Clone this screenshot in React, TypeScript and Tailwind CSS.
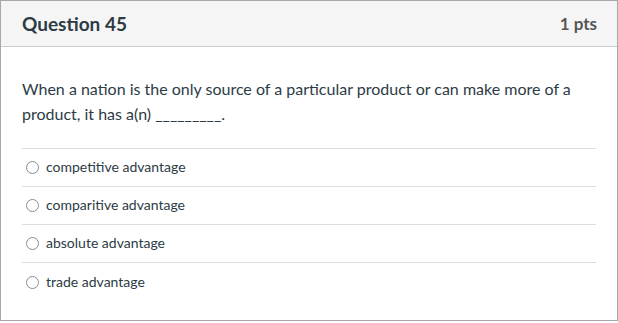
const answers = [
  "competitive advantage",
  "comparitive advantage",
  "absolute advantage",
  "trade advantage",
];

export default function App() {
  return (
    <div className="w-[618px] h-[323px] bg-white font-['Lato',sans-serif]">
      <div className="h-[321px] border border-[#a8a8a8] flex flex-col">
        <div className="h-[46px] bg-[#f5f5f5] border-b border-[#c7cdd1] flex items-center justify-between pl-[21px] pr-[20px]">
          <h2 className="text-[19px] font-bold text-[#2d3b45] mt-[1px]">Question 45</h2>
          <span className="text-[17px] font-bold text-[#555] mt-[1px]">1 pts</span>
        </div>
        <div className="px-[21px] pt-[29px]">
          <p className="text-[16px] leading-[25px] text-[#2d3b45]">
            When a nation is the only source of a particular product or can make more of a
            product, it has a(n) _________.
          </p>
          <div className="mt-[22px] border-t border-[#dddddd]">
            {answers.map((a, i) => (
              <div
                key={a}
                className={
                  "h-[38px] flex items-center pl-[4px] gap-[7px] " +
                  (i < answers.length - 1 ? "border-b border-[#dddddd]" : "")
                }
              >
                <span className="w-[13px] h-[13px] rounded-full border border-[#8b8b8b] bg-white" />
                <span className="text-[14px] text-[#2d3b45] -mt-[2px]">{a}</span>
              </div>
            ))}
          </div>
        </div>
      </div>
    </div>
  );
}
